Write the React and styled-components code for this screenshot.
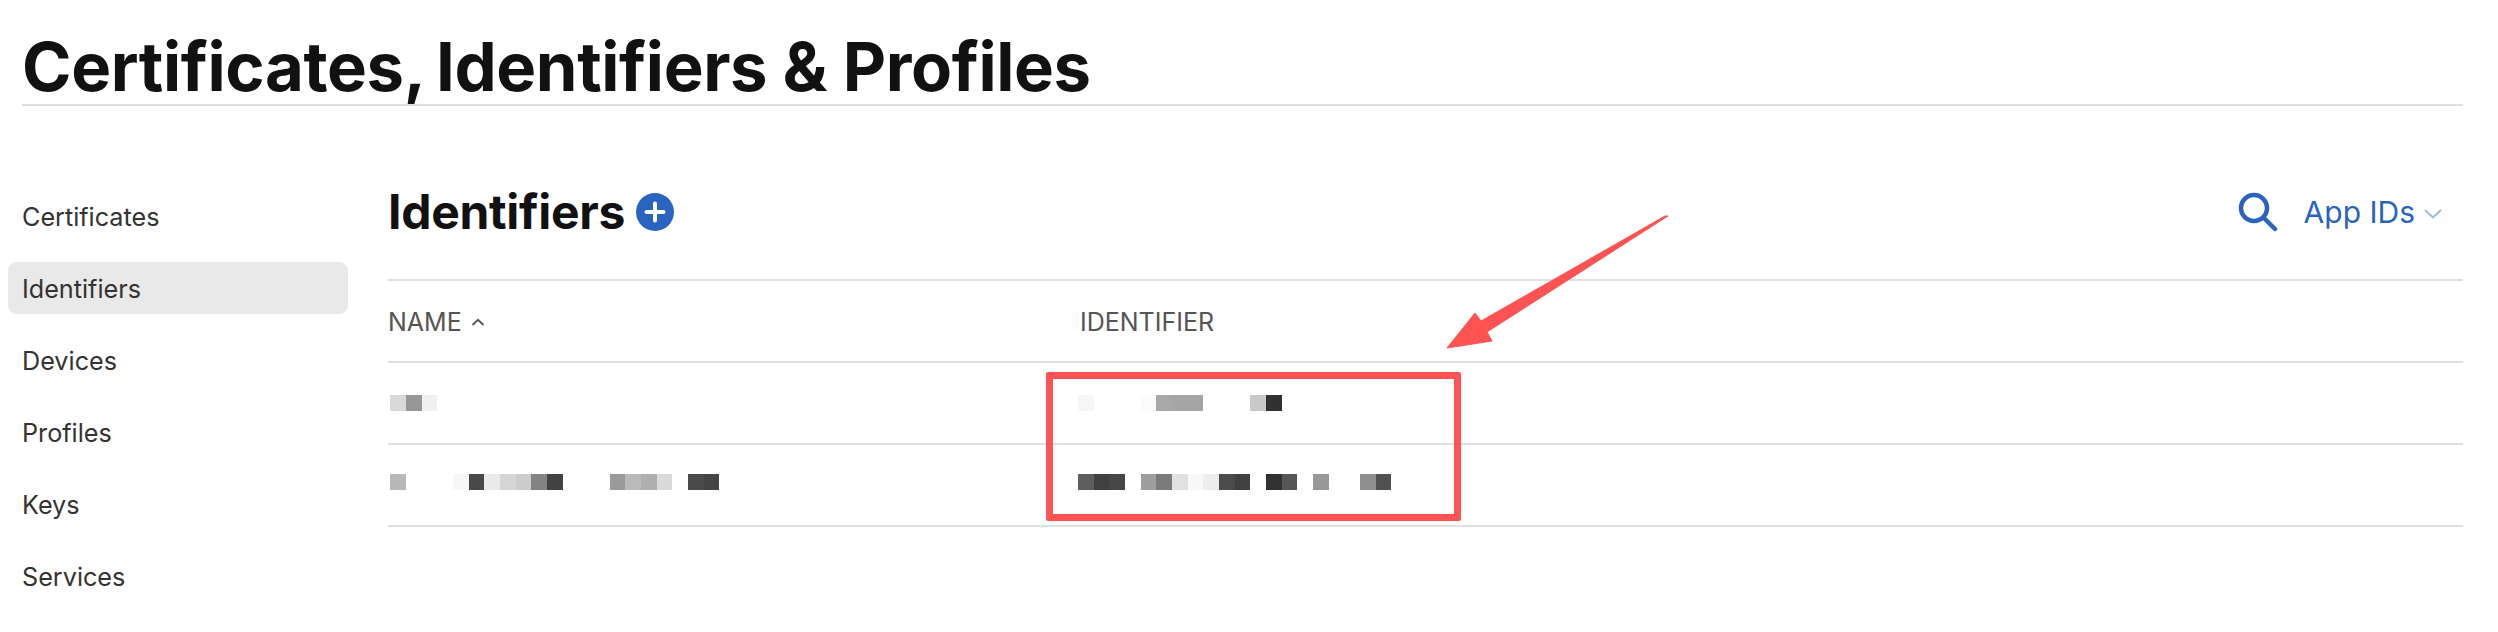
import React from 'react';
import styled, { createGlobalStyle } from 'styled-components';

const GlobalStyle = createGlobalStyle`
  html, body {
    margin: 0;
    padding: 0;
    background: #fff;
    font-family: Inter, "Liberation Sans", sans-serif;
  }
`;

const Page = styled.div`
  position: relative;
  width: 2498px;
  height: 632px;
  overflow: hidden;
`;

const Header = styled.header`
  margin: 0 35px 0 22px;
  height: 104px;
  border-bottom: 2px solid #e0e0e0;
  display: flex;
  align-items: flex-end;
`;

const Title = styled.h1`
  margin: 0;
  font-size: 67px;
  line-height: 74px;
  font-weight: 700;
  letter-spacing: -0.4px;
  word-spacing: 0;
  color: #111;
`;

const TightGap = styled.span`
  letter-spacing: -5.4px;
`;

const Body = styled.div`
  display: flex;
  padding: 84px 35px 0 8px;
`;

const Sidebar = styled.nav`
  width: 340px;
  display: flex;
  flex-direction: column;
  gap: 20px;
  flex: none;
`;

const NavItem = styled.div`
  height: 52px;
  box-sizing: border-box;
  padding: 1px 0 0 14px;
  display: flex;
  align-items: center;
  border-radius: 9px;
  font-size: 25.2px;
  color: #333;
  background: ${(p) => (p.$active ? '#e9e9e9' : 'transparent')};
`;

const Main = styled.main`
  flex: 1;
  margin-left: 40px;
`;

const TopBar = styled.div`
  height: 44px;
  padding-bottom: 45px;
  display: flex;
  align-items: center;
  border-bottom: 2px solid #e0e0e0;
`;

const Heading = styled.h2`
  margin: 0;
  font-size: 48px;
  line-height: 52px;
  font-weight: 700;
  letter-spacing: -0.3px;
  color: #111;
`;

const AddButton = styled.svg`
  width: 38px;
  height: 38px;
  margin-left: 11px;
`;

const Actions = styled.div`
  margin-left: auto;
  display: flex;
  align-items: center;
  color: #2a64c0;
`;

const SearchIcon = styled.svg`
  width: 40px;
  height: 40px;
  margin-right: 26px;
`;

const Filter = styled.span`
  font-size: 30px;
  line-height: 36px;
`;

const Chevron = styled.svg`
  width: 18px;
  height: 10px;
  margin: 4px 21px 0 9px;
`;

const Row = styled.div`
  display: grid;
  grid-template-columns: 692px 1fr;
  align-items: center;
  height: 80px;
  box-sizing: content-box;
  border-bottom: 2px solid #e0e0e0;
`;

const BlurRow = styled(Row)`
  height: ${(p) => 80 - p.$lift * 2}px;
  padding-bottom: ${(p) => p.$lift * 2}px;
`;

const ColumnLabel = styled.div`
  display: flex;
  align-items: center;
  padding-top: 2px;
  font-size: 25px;
  color: #555;
`;

const SortCaret = styled.svg`
  width: 14px;
  height: 8px;
  margin-left: 9px;
`;

const Mosaic = styled.div`
  display: flex;
  margin-left: ${(p) => p.$shift}px;
`;

const Cell = styled.span`
  display: block;
  width: 15.68px;
  height: 16px;
  background: ${(p) => p.$shade || 'transparent'};
`;

const Highlight = styled.div`
  position: absolute;
  left: 1046px;
  top: 372px;
  width: 415px;
  height: 149px;
  box-sizing: border-box;
  border: 7px solid #fd5353;
  border-radius: 2px;
`;

const Arrow = styled.svg`
  position: absolute;
  left: 1440px;
  top: 210px;
  width: 235px;
  height: 145px;
`;

const NAV = ['Certificates', 'Identifiers', 'Devices', 'Profiles', 'Keys', 'Services'];

const ROWS = [
  {
    lift: 0,
    name: ['#d9d9d9', '#979797', '#f0f0f0'],
    id: ['#f6f6f6', 0, 0, 0, '#fbfbfb', '#a8a8a8', '#a5a5a5', '#a5a5a5', 0, 0, 0, '#c9c9c9', '#313131'],
  },
  {
    lift: 3,
    name: ['#b8b8b8', 0, 0, 0, '#f7f7f7', '#494949', '#eaeaea', '#d6d6d6', '#cdcdcd', '#848484', '#434343', 0, 0, 0, '#9a9a9a', '#bababa', '#afafaf', '#dadada', 0, '#4a4a4a', '#444444'],
    id: ['#5e5e5e', '#404040', '#474747', 0, '#9e9e9e', '#7b7b7b', '#e1e1e1', '#f9f9f9', '#ededed', '#4c4c4c', '#404040', 0, '#323232', '#565656', 0, '#989898', 0, 0, '#8e8e8e', '#515151'],
  },
];

const Pixels = ({ shades, shift }) => (
  <Mosaic $shift={shift}>
    {shades.map((shade, i) => <Cell key={i} $shade={shade} />)}
  </Mosaic>
);

export default function App() {
  return (
    <Page>
      <GlobalStyle />
      <Header>
        <Title>Certificates<TightGap>,</TightGap> Identifiers &amp; Profiles</Title>
      </Header>
      <Body>
        <Sidebar>
          {NAV.map((item) => (
            <NavItem key={item} $active={item === 'Identifiers'}>{item}</NavItem>
          ))}
        </Sidebar>
        <Main>
          <TopBar>
            <Heading>Identifiers</Heading>
            <AddButton viewBox="0 0 38 38">
              <circle cx="19" cy="19" r="19" fill="#2a64c0" />
              <path d="M19 10.5v17M10.5 19h17" stroke="#fff" strokeWidth="4" strokeLinecap="round" />
            </AddButton>
            <Actions>
              <SearchIcon viewBox="0 0 40 40" fill="none" stroke="currentColor" strokeWidth="4.5" strokeLinecap="round">
                <circle cx="16" cy="16" r="13" />
                <path d="M26 26l11 11" />
              </SearchIcon>
              <Filter>App IDs</Filter>
              <Chevron viewBox="0 0 18 10" fill="none" stroke="#9bb8e3" strokeWidth="2" strokeLinecap="round">
                <path d="M1.5 1.5L9 8.5l7.5-7" />
              </Chevron>
            </Actions>
          </TopBar>
          <Row>
            <ColumnLabel>
              NAME
              <SortCaret viewBox="0 0 14 8" fill="none" stroke="#555" strokeWidth="1.8">
                <path d="M1.5 7L7 1.8 12.5 7" />
              </SortCaret>
            </ColumnLabel>
            <ColumnLabel>IDENTIFIER</ColumnLabel>
          </Row>
          {ROWS.map((row, i) => (
            <BlurRow key={i} $lift={row.lift}>
              <Pixels shades={row.name} shift={2.2} />
              <Pixels shades={row.id} shift={-2} />
            </BlurRow>
          ))}
        </Main>
      </Body>
      <Highlight />
      <Arrow viewBox="1440 210 235 145">
        <path d="M1668 216L1487 332L1492 341L1447 348L1475 313L1481 321L1665 216Z" fill="#fd5353" stroke="#fd5353" strokeWidth="1" strokeLinejoin="round" />
      </Arrow>
    </Page>
  );
}
